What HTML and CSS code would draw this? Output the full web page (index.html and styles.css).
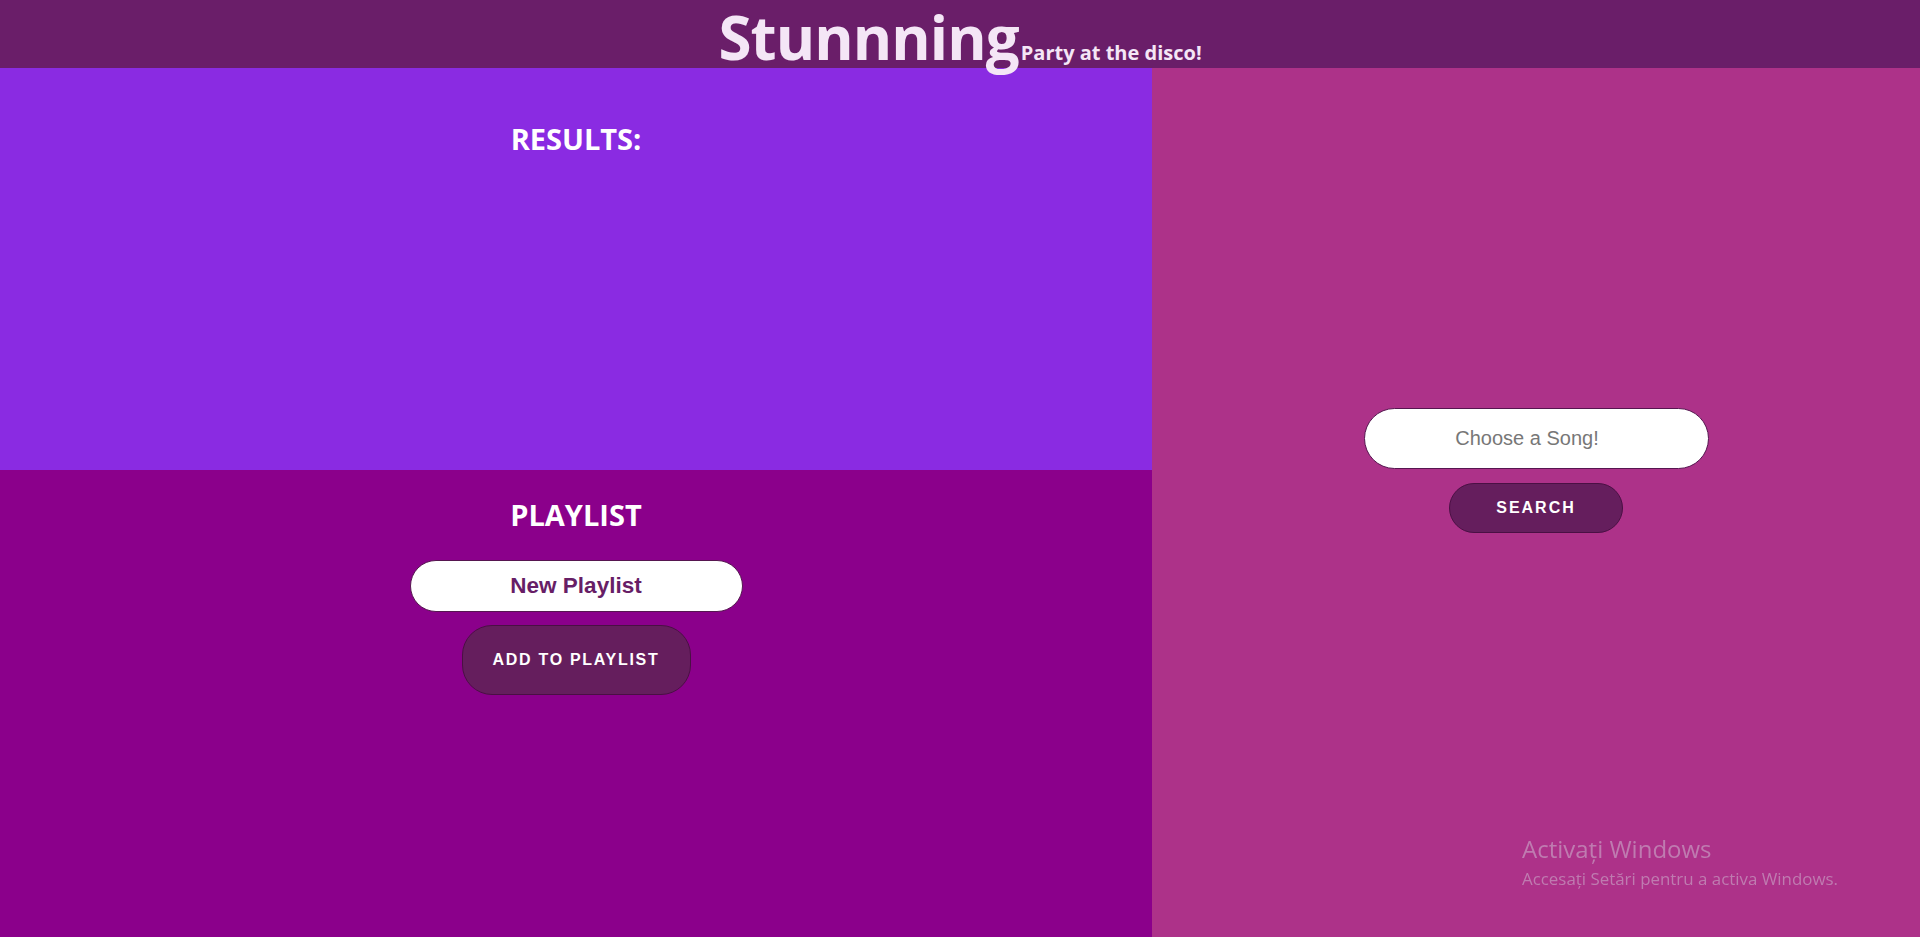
FILE: index.html
```html
<!DOCTYPE html>
<html lang="en">
<head>
<meta charset="utf-8">
<title>Stunnning</title>
<link rel="stylesheet" href="styles.css">
</head>
<body>
<header class="top">
  <h1 class="brand">Stunnning</h1><span class="tagline">Party at the disco!</span>
</header>
<main class="layout">
  <div class="left">
    <section class="results">
      <h2 class="heading">RESULTS:</h2>
    </section>
    <section class="playlist">
      <h2 class="heading">PLAYLIST</h2>
      <input class="name-input" type="text" value="New Playlist">
      <button class="btn btn-add">ADD TO PLAYLIST</button>
    </section>
  </div>
  <div class="right">
    <input class="search-input" type="text" placeholder="Choose a Song!">
    <button class="btn btn-search">SEARCH</button>
  </div>
</main>
<div class="watermark">
  <div class="wm-title">Activați Windows</div>
  <div class="wm-sub">Accesați Setări pentru a activa Windows.</div>
</div>
</body>
</html>
```

FILE: styles.css
```css
* { box-sizing: border-box; }
html, body { margin: 0; padding: 0; }
body {
  font-family: "Open Sans", "Noto Sans", sans-serif;
  width: 1920px;
  height: 937px;
  overflow: hidden;
  background: #ad3289;
}
.top {
  height: 68px;
  background: #6a1e69;
  display: flex;
  justify-content: center;
  align-items: baseline;
  padding-top: 1px;
  color: #f4e6f6;
  position: relative;
  z-index: 2;
}
.brand {
  margin: 0;
  font-size: 60px;
  line-height: 72px;
  font-weight: 700;
  letter-spacing: -0.9px;
}
.tagline {
  font-size: 20px;
  font-weight: 700;
  margin-left: 2px;
}
.layout {
  display: grid;
  grid-template-columns: 1152px 1fr;
  height: 869px;
}
.left {
  display: flex;
  flex-direction: column;
}
.results {
  height: 402px;
  background: #8a2be2;
  padding-top: 51px;
  text-align: center;
}
.playlist {
  flex: 1;
  background: #8b008b;
  padding-top: 25px;
  display: flex;
  flex-direction: column;
  align-items: center;
}
.heading {
  margin: 0;
  color: #ffffff;
  font-size: 29px;
  font-weight: 700;
  line-height: 1.362;
}
.name-input {
  margin-top: 26px;
  width: 333px;
  height: 52px;
  border: 1px solid #561650;
  border-radius: 26px;
  background: #ffffff;
  text-align: center;
  font-family: "Liberation Sans", Arial, sans-serif;
  font-weight: 700;
  font-size: 22.5px;
  color: #671e66;
  outline: none;
}
.btn {
  background: #651e5d;
  border: 1px solid #4a1044;
  color: #ffffff;
  font-family: "Liberation Sans", Arial, sans-serif;
  font-weight: 700;
  font-size: 16px;
  cursor: pointer;
}
.btn-add {
  margin-top: 13px;
  width: 229px;
  height: 70px;
  border-radius: 30px;
  letter-spacing: 1.7px;
}
.right {
  display: flex;
  flex-direction: column;
  align-items: center;
  justify-content: center;
  padding-bottom: 64px;
}
.search-input {
  width: 345px;
  height: 61px;
  border: 1px solid #561650;
  border-radius: 31px;
  background: #ffffff;
  text-align: center;
  padding: 0 18px 0 0;
  font-family: "Liberation Sans", Arial, sans-serif;
  font-size: 20px;
  color: #333;
  outline: none;
}
.search-input::placeholder { color: #777777; }
.btn-search {
  margin-top: 14px;
  width: 174px;
  height: 50px;
  border-radius: 25px;
  letter-spacing: 2px;
}
.watermark {
  position: fixed;
  left: 1522px;
  top: 833px;
  color: #bf7bb0;
  pointer-events: none;
}
.wm-title {
  font-size: 24px;
  line-height: 32px;
}
.wm-sub {
  font-size: 16.9px;
  line-height: 27px;
}
```
